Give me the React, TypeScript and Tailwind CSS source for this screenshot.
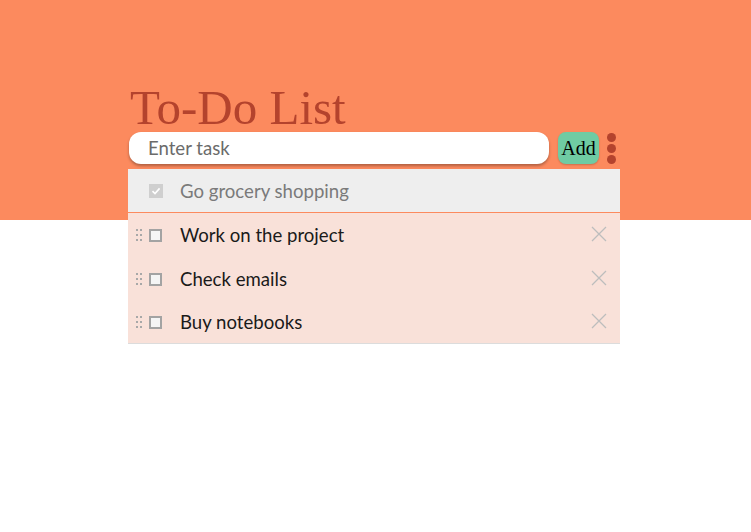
import * as React from 'react';

const tasks = [
  { id: 1, text: 'Go grocery shopping', done: true },
  { id: 2, text: 'Work on the project', done: false },
  { id: 3, text: 'Check emails', done: false },
  { id: 4, text: 'Buy notebooks', done: false },
];

function Grip() {
  return (
    <div className="grid grid-cols-2 gap-x-[2px] gap-y-[3px]">
      {Array.from({ length: 6 }).map((_, i) => (
        <span key={i} className="block h-[2px] w-[2px] bg-[#a8a8a8]" />
      ))}
    </div>
  );
}

function Cross() {
  return (
    <svg width="16" height="16" viewBox="0 0 16 16" className="text-[#bdbdbd]">
      <path d="M1 1L15 15M15 1L1 15" stroke="currentColor" strokeWidth="1.3" />
    </svg>
  );
}

export default function App() {
  const [items, setItems] = React.useState(tasks);

  return (
    <div className="min-h-[532px] bg-[linear-gradient(#fc8a5e_220px,#ffffff_220px)] font-['Lato',sans-serif]">
      <div className="ml-[128px] w-[492px] pt-[84px]">
        <h1 className="ml-[2px] font-['Liberation_Serif',serif] text-[49px] leading-[48px] text-[#b4432d]">
          To-Do List
        </h1>
        <div className="flex items-center">
          <div className="ml-[1px] flex h-[32px] w-[420px] items-center rounded-xl bg-white pl-[19px] shadow-[0_2px_3px_rgba(0,0,0,0.3)]">
            <input
              placeholder="Enter task"
              className="w-full translate-y-[1px] bg-transparent text-[18.6px] text-[#333] outline-none placeholder:text-[#6b6b6b]"
            />
          </div>
          <button className="ml-[9px] h-[32px] w-[41px] rounded-lg bg-[#6fcba3] font-['Liberation_Serif',serif] text-[20px] text-black shadow-[0_1px_2px_rgba(0,0,0,0.2)]">
            Add
          </button>
          <div className="ml-[8px] flex flex-col gap-[2px]">
            <span className="h-[9px] w-[9px] rounded-full bg-[#b4432d]" />
            <span className="h-[9px] w-[9px] rounded-full bg-[#b4432d]" />
            <span className="h-[9px] w-[9px] rounded-full bg-[#b4432d]" />
          </div>
        </div>

        <ul className="mt-[5px] border-b border-[#dcdcdc]">
          {items.map((t, i) =>
            t.done ? (
              <li key={t.id} className="flex h-[44px] items-center border-b border-[#fc8a5e] bg-[#eeeeee] pl-[21px]">
                <span className="flex h-[14px] w-[14px] items-center justify-center bg-[#cfcfcf]">
                  <svg width="10" height="10" viewBox="0 0 10 10">
                    <path d="M1.5 5.2L4 7.6L8.6 2.4" fill="none" stroke="#fff" strokeWidth="1.6" />
                  </svg>
                </span>
                <span className="ml-[17px] translate-y-[1px] text-[18.6px] text-[#7a7a7a]">{t.text}</span>
              </li>
            ) : (
              <li
                key={t.id}
                className={`flex items-center bg-[#f9e1d9] pl-[8px] pr-[13px] ${i === items.length - 1 ? 'h-[42px]' : 'h-[44px]'}`}
              >
                <Grip />
                <span className="ml-[7px] h-[13px] w-[13px] border-2 border-[#a3a3a3] bg-[#f5f5f5]" />
                <span className="ml-[18px] flex-1 translate-y-[1px] text-[18.6px] text-[#1a1a1a]">{t.text}</span>
                <button onClick={() => setItems((s) => s.filter((x) => x.id !== t.id))} className="-mt-[2px]">
                  <Cross />
                </button>
              </li>
            )
          )}
        </ul>
      </div>
    </div>
  );
}
